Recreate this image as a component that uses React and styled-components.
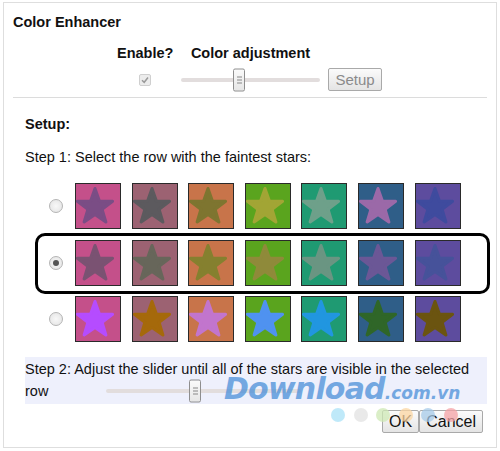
import React from "react";
import styled, { createGlobalStyle } from "styled-components";

const GlobalStyle = createGlobalStyle`
  html, body { margin: 0; padding: 0; background: #fff; }
  body { font-family: "Liberation Sans", Arial, sans-serif; color: #111; }
`;

const tiles = ["#c4508a", "#9c6272", "#c8744a", "#5aa41e", "#1f9a72", "#2f5e88", "#5d4c9e"];
const rows = [
  { stars: ["#7a4d85", "#5c5a5e", "#7e7530", "#a2a535", "#6ea08a", "#9b69a8", "#3f4b9e"] },
  { stars: ["#7a5272", "#67665a", "#85802f", "#8f8a3a", "#6a9582", "#6b5796", "#46529a"], selected: true },
  { stars: ["#b54cff", "#a5690b", "#c275cd", "#4f92f0", "#2196e0", "#2f6628", "#6b5410"] },
];

const starPoints = (() => {
  const pts = [];
  for (let i = 0; i < 10; i++) {
    const r = i % 2 === 0 ? 18.5 : 7.5;
    const a = (-90 + i * 36) * (Math.PI / 180);
    pts.push(`${(20 + r * Math.cos(a)).toFixed(2)},${(24 + r * Math.sin(a)).toFixed(2)}`);
  }
  return pts.join(" ");
})();

const Frame = styled.div`
  margin: 2px 3px;
  width: 492px;
  height: 444px;
  border: 1px solid #dedede;
  position: relative;
  overflow: hidden;
`;

const Title = styled.div`
  font-weight: bold;
  font-size: 14.5px;
  line-height: 16px;
  padding: 11px 0 0 9px;
`;

const Controls = styled.div`
  display: grid;
  grid-template-columns: 56px 139px 54px;
  column-gap: 8px;
  row-gap: 7px;
  margin: 15px 0 0 113px;
  align-items: center;
`;

const Label = styled.div`
  font-weight: bold;
  font-size: 14.5px;
  line-height: 16px;
  text-align: center;
  white-space: nowrap;
`;

const CheckBox = styled.span`
  justify-self: center;
  width: 10px;
  height: 10px;
  border: 1px solid #cfcfcf;
  border-radius: 2px;
  background: #ececec;
  display: flex;
  align-items: center;
  justify-content: center;
`;

const Track = styled.div`
  position: relative;
  height: 4px;
  background: #e2dddd;
  border-radius: 2px;
  width: ${(p) => p.$w}px;
`;

const Thumb = styled.div`
  position: absolute;
  top: 50%;
  width: 10px;
  height: 21px;
  transform: translateY(-50%);
  background: linear-gradient(#fafafa, #e6e6e6);
  border: 1px solid #8e8e8e;
  border-radius: 2px;
  display: flex;
  flex-direction: column;
  align-items: center;
  justify-content: center;
  gap: 2px;
  span { width: 5px; height: 1px; background: #888; }
`;

const Button = styled.button`
  font-family: "Liberation Sans", Arial, sans-serif;
  font-size: ${(p) => p.$fs || 15}px;
  color: ${(p) => (p.disabled ? "#8a8a8a" : "#111")};
  height: 23px;
  padding: 0 ${(p) => p.$px || 6}px;
  border: 1px solid #a9a9a9;
  border-radius: 2px;
  background: linear-gradient(#fbfbfb, #e4e4e4);
  line-height: 20px;
`;

const Rule = styled.hr`
  border: none;
  border-top: 1px solid #dcdcdc;
  margin: 6px 9px 0 9px;
`;

const Section = styled.div`
  padding: 0 0 0 21px;
`;

const SectionTitle = styled.div`
  font-weight: bold;
  font-size: 14.5px;
  line-height: 16px;
  margin-top: 18px;
`;

const Text = styled.div`
  font-size: 14.5px;
  line-height: 16px;
  margin-top: 17px;
`;

const Grid = styled.div`
  display: flex;
  flex-direction: column;
  gap: 10.5px;
  margin: 18px 0 0 10px;
  width: 455px;
`;

const Row = styled.div`
  position: relative;
  display: flex;
  align-items: center;
  height: 46px;
  &::before {
    content: "";
    display: ${(p) => (p.$selected ? "block" : "none")};
    position: absolute;
    inset: -7px 0 -8px 0;
    border: 3px solid #000;
    border-radius: 10px;
  }
`;

const Radio = styled.span`
  width: 12px;
  height: 12px;
  border-radius: 50%;
  border: 1px solid #b4b4b4;
  background: radial-gradient(circle, #f8f8f8, #e2e2e2);
  margin: 0 12px 0 14px;
  display: flex;
  align-items: center;
  justify-content: center;
  &::after {
    content: "";
    display: ${(p) => (p.$on ? "block" : "none")};
    width: 6px;
    height: 6px;
    border-radius: 50%;
    background: #555;
  }
`;

const Tiles = styled.div`
  display: flex;
  gap: 10.6px;
`;

const Tile = styled.div`
  width: 44px;
  height: 44px;
  border: 1px solid #2a2a2a;
  background: ${(p) => p.$bg};
  svg { display: block; }
`;

const Band = styled.div`
  margin: 15px 9px 0 0;
  background: #eef0fc;
  font-size: 14.5px;
  line-height: 22px;
  padding: 1px 0 2px 0;
  width: 462px;
`;

const InlineSlider = styled.span`
  display: inline-block;
  vertical-align: middle;
  margin: -2px 0 0 58px;
`;

const Footer = styled.div`
  display: flex;
  justify-content: flex-end;
  padding: 6px 13px 0 0;
`;

const Watermark = styled.div`
  position: absolute;
  left: 220px;
  top: 374px;
  line-height: 24px;
  color: #4a8fd8;
  opacity: 0.75;
  font-family: "DejaVu Sans", sans-serif;
  font-style: italic;
  font-weight: bold;
  white-space: nowrap;
  pointer-events: none;
  b { font-size: 30px; letter-spacing: -0.8px; }
  small { font-size: 17px; font-weight: bold; }
`;

const Dots = styled.div`
  position: absolute;
  left: 327px;
  top: 405px;
  display: flex;
  gap: 8.5px;
  pointer-events: none;
`;

const Dot = styled.span`
  width: 14px;
  height: 14px;
  border-radius: 50%;
  background: ${(p) => p.$c};
  opacity: 0.75;
`;

const Slider = ({ width, at }) => (
  <Track $w={width}>
    <Thumb style={{ left: at }}>
      <span />
      <span />
      <span />
    </Thumb>
  </Track>
);

const Star = ({ color }) => (
  <svg width="44" height="44" viewBox="1 1 44 44">
    <polygon points={starPoints} fill={color} stroke={color} strokeWidth="3" strokeLinejoin="round" />
  </svg>
);

export default function App() {
  return (
    <>
      <GlobalStyle />
      <Frame>
        <Title>Color Enhancer</Title>
        <Controls>
          <Label>Enable?</Label>
          <Label>Color adjustment</Label>
          <span />
          <CheckBox>
            <svg width="8" height="8" viewBox="0 0 8 8">
              <path d="M1 4.2 L3.2 6.3 L7 1.5" fill="none" stroke="#9a9a9a" strokeWidth="1.5" />
            </svg>
          </CheckBox>
          <Slider width={139} at={52} />
          <Button disabled>Setup</Button>
        </Controls>
        <Rule />
        <Section>
          <SectionTitle>Setup:</SectionTitle>
          <Text>Step 1: Select the row with the faintest stars:</Text>
          <Grid>
            {rows.map((row, i) => (
              <Row key={i} $selected={row.selected}>
                <Radio $on={row.selected} />
                <Tiles>
                  {tiles.map((bg, j) => (
                    <Tile key={j} $bg={bg}>
                      <Star color={row.stars[j]} />
                    </Tile>
                  ))}
                </Tiles>
              </Row>
            ))}
          </Grid>
          <Band>
            Step 2: Adjust the slider until all of the stars are visible in the selected row
            <InlineSlider>
              <Slider width={195} at={83} />
            </InlineSlider>
          </Band>
        </Section>
        <Footer>
          <Button $fs={16} $px={6}>OK</Button>
          <Button $fs={16} $px={6}>Cancel</Button>
        </Footer>
        <Watermark>
          <b>Download</b>
          <small>.com.vn</small>
        </Watermark>
        <Dots>
          {["#a9e2f7", "#e2e2e2", "#cde8b4", "#fbd5a2", "#a6c9e8", "#f4a2a6"].map((c) => (
            <Dot key={c} $c={c} />
          ))}
        </Dots>
      </Frame>
    </>
  );
}
